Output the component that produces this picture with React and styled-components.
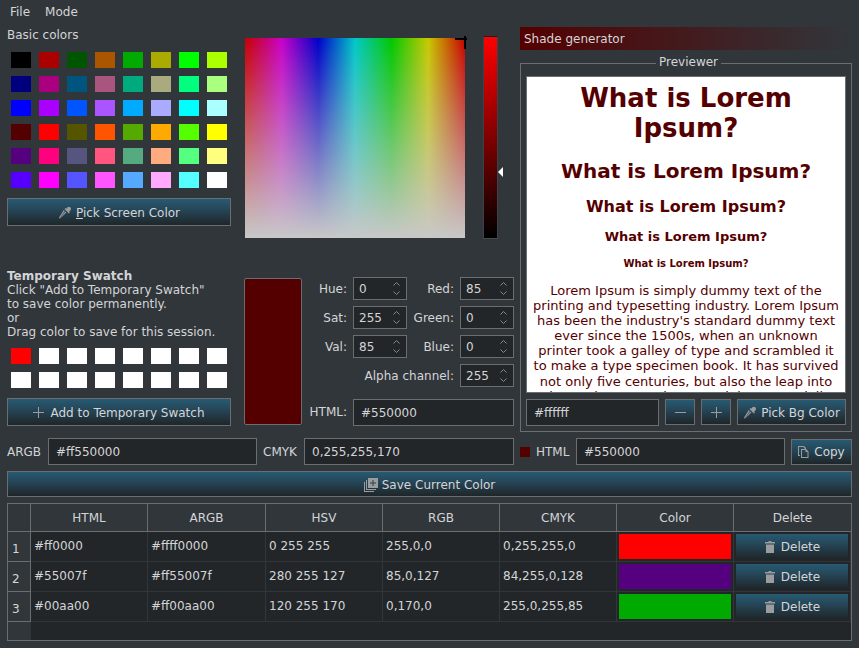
import React from "react";
import styled, { createGlobalStyle } from "styled-components";

const GlobalStyle = createGlobalStyle`
  html, body {
    margin: 0;
    padding: 0;
    background: #31363b;
  }
  * {
    box-sizing: border-box;
  }
`;

const basicColors = [
  "#000000", "#aa0000", "#005500", "#aa5500", "#00aa00", "#aaaa00", "#00ff00", "#aaff00",
  "#00007f", "#aa007f", "#00557f", "#aa557f", "#00aa7f", "#aaaa7f", "#00ff7f", "#aaff7f",
  "#0000ff", "#aa00ff", "#0055ff", "#aa55ff", "#00aaff", "#aaaaff", "#00ffff", "#aaffff",
  "#550000", "#ff0000", "#555500", "#ff5500", "#55aa00", "#ffaa00", "#55ff00", "#ffff00",
  "#55007f", "#ff007f", "#55557f", "#ff557f", "#55aa7f", "#ffaa7f", "#55ff7f", "#ffff7f",
  "#5500ff", "#ff00ff", "#5555ff", "#ff55ff", "#55aaff", "#ffaaff", "#55ffff", "#ffffff",
];

const tempColors = ["#ff0000", ...Array(15).fill("#ffffff")];

const savedColors = [
  { html: "#ff0000", argb: "#ffff0000", hsv: "0 255 255", rgb: "255,0,0", cmyk: "0,255,255,0", color: "#ff0000" },
  { html: "#55007f", argb: "#ff55007f", hsv: "280 255 127", rgb: "85,0,127", cmyk: "84,255,0,128", color: "#55007f" },
  { html: "#00aa00", argb: "#ff00aa00", hsv: "120 255 170", rgb: "0,170,0", cmyk: "255,0,255,85", color: "#00aa00" },
];

const Window = styled.div`
  width: 859px;
  height: 648px;
  overflow: hidden;
  background: #31363b;
  color: #d3d5d7;
  font-family: "DejaVu Sans", sans-serif;
  font-size: 12px;
  line-height: 14px;
`;

const MenuBar = styled.div`
  display: flex;
  gap: 15px;
  height: 22px;
  padding: 5px 10px 0;
`;

const MenuItem = styled.span``;

const TopArea = styled.div`
  display: flex;
  height: 405px;
  margin-top: 5px;
  padding-left: 7px;
`;

const LeftColumn = styled.div`
  width: 224px;
  margin-right: 13px;
`;

const BasicLabel = styled.div`
  padding-top: 1px;
`;

const SwatchGrid = styled.div`
  display: grid;
  grid-template-columns: repeat(8, 20px);
  grid-auto-rows: 16px;
  column-gap: 8px;
  row-gap: 8px;
  margin-top: ${(p) => p.$top}px;
  padding-left: 4px;
`;

const Swatch = styled.div`
  background: ${(p) => p.$color};
`;

const Button = styled.button`
  display: flex;
  align-items: center;
  justify-content: center;
  gap: ${(p) => p.$gap || 4}px;
  width: ${(p) => (p.$width ? `${p.$width}px` : "100%")};
  height: ${(p) => p.$height || 28}px;
  margin-top: ${(p) => p.$top || 0}px;
  padding: 1px 0 0;
  border: ${(p) => (p.$flat ? "0" : "1px solid #6a6e71")};
  border-radius: 0;
  background: linear-gradient(#275a72, #26495c 35%, #1f2629);
  color: #d3d5d7;
  font: inherit;
`;

const Underlined = styled.span`
  text-decoration: underline;
`;

const SwatchHelp = styled.div`
  margin-top: 43px;
`;

const Strong = styled.div`
  font-weight: bold;
`;

const MiddleColumn = styled.div`
  width: 270px;
  margin-right: 6px;
`;

const PickerRow = styled.div`
  display: flex;
  align-items: flex-start;
  height: 212px;
  padding: 9px 0 0 1px;
`;

const Spectrum = styled.div`
  position: relative;
  width: 220px;
  height: 200px;
  margin-top: 2px;
  background:
    linear-gradient(rgba(200, 200, 200, 0), #c8c8c8),
    linear-gradient(
      to right,
      #c80000,
      #c800c8 16.67%,
      #0000c8 33.33%,
      #00c8c8 50%,
      #00c800 66.67%,
      #c8c800 83.33%,
      #c80000
    );
`;

const CrossH = styled.div`
  position: absolute;
  top: 0;
  right: -2px;
  width: 12px;
  height: 2px;
  background: #000;
`;

const CrossV = styled.div`
  position: absolute;
  top: -2px;
  right: -1px;
  width: 2px;
  height: 13px;
  background: #000;
`;

const ValueBar = styled.div`
  position: relative;
  width: 15px;
  height: 203px;
  margin-left: 18px;
  border: 1px solid #1d2023;
  border-left-color: #3c4247;
  border-right-color: #3c4247;
  border-bottom-color: #444a50;
  background: linear-gradient(#ff0000, #000000);
`;

const ValueArrow = styled.div`
  position: absolute;
  top: 130px;
  left: 14px;
  width: 0;
  height: 0;
  border-style: solid;
  border-width: 5px 5px 5px 0;
  border-color: transparent #ffffff transparent transparent;
`;

const FormRow = styled.div`
  display: flex;
  align-items: flex-start;
  margin-top: 38px;
`;

const CurrentColor = styled.div`
  width: 58px;
  height: 147px;
  margin-top: 1px;
  border: 1px solid #6a6e71;
  border-radius: 2px;
  background: #550000;
`;

const FieldGrid = styled.div`
  display: grid;
  grid-template-columns: 45px 54px 41px 54px;
  grid-template-rows: repeat(4, 23px) 33px;
  column-gap: 6px;
  row-gap: 6px;
`;

const FieldLabel = styled.label`
  grid-column: ${(p) => p.$span || "auto"};
  align-self: center;
  text-align: right;
  white-space: nowrap;
`;

const Spin = styled.div`
  display: flex;
  align-items: center;
  justify-content: space-between;
  padding: 0 6px 0 5px;
  border: 1px solid #6a6e71;
  background: #232629;
`;

const SpinArrows = styled.svg`
  display: block;
  width: 7px;
  height: 17px;
`;

const TextField = styled.div`
  display: flex;
  align-items: center;
  width: ${(p) => (p.$width ? `${p.$width}px` : "auto")};
  height: 27px;
  padding: 0 7px;
  border: 1px solid #6a6e71;
  background: #232629;
  grid-column: ${(p) => p.$span || "auto"};
`;

const HtmlLabel = styled(FieldLabel)`
  align-self: end;
  margin-bottom: 7px;
`;

const HtmlField = styled(TextField)`
  align-self: end;
`;

const RightColumn = styled.div`
  width: 332px;
`;

const ShadeBar = styled.div`
  height: 23px;
  padding: 5px 4px 0;
  background: linear-gradient(to right, #550000, #31363b);
`;

const Group = styled.fieldset`
  height: 377px;
  margin: 5px 0 0;
  padding: 0 5px;
  border: 1px solid #6a6e71;
`;

const Legend = styled.legend`
  margin-left: 130px;
  padding: 0 3px 2px;
`;

const Preview = styled.div`
  height: 317px;
  margin-top: 5px;
  padding: 6px 5px 0;
  overflow: hidden;
  border: 1px solid #6a6e71;
  background: #ffffff;
  color: #550000;
  text-align: center;
  font-size: 13px;
`;

const H1 = styled.div`
  font-size: 26px;
  line-height: 30px;
  font-weight: bold;
`;

const H2 = styled.div`
  margin-top: ${(p) => p.$top}px;
  font-size: ${(p) => p.$size}px;
  line-height: ${(p) => p.$line}px;
  font-weight: bold;
`;

const Lorem = styled.p`
  margin: 13px 0 0;
  font-size: 13px;
  line-height: 15.1px;
`;

const PreviewTools = styled.div`
  display: flex;
  align-items: flex-start;
  gap: 6px;
  margin-top: 6px;
`;

const ValueRow = styled.div`
  display: grid;
  grid-template-columns: 35px 209px 35px 210px 10px 34px 209px 61px;
  column-gap: 6px;
  align-items: center;
  margin-top: 6px;
  padding-left: 7px;
`;

const ColorDot = styled.div`
  width: 10px;
  height: 10px;
  background: #550000;
`;

const SaveWrap = styled.div`
  margin: 6px 7px 0;
`;

const Table = styled.div`
  display: grid;
  grid-template-columns: 23px 117px 118px repeat(4, 117px) 1fr;
  grid-template-rows: 28px 30px 30px 30px 1fr;
  height: 138px;
  margin: 6px 7px 0;
  border: 1px solid #6a6e71;
  background: #232629;
`;

const HeaderCell = styled.div`
  display: flex;
  align-items: center;
  justify-content: center;
  border-right: 1px solid #6a6e71;
  border-bottom: 1px solid #6a6e71;
  background: #31363b;

  &:nth-child(8) {
    border-right: 0;
  }
`;

const RowNumber = styled.div`
  display: flex;
  align-items: center;
  padding: 4px 0 0 4px;
  border-right: 1px solid #6a6e71;
  border-bottom: 1px solid #6a6e71;
  background: #31363b;
`;

const Cell = styled.div`
  display: flex;
  align-items: center;
  padding: 0 4px 2px 3px;
  border-right: 1px solid #31363b;
  border-bottom: 1px solid #31363b;
`;

const ToolCell = styled.div`
  display: flex;
  padding: 2px;
  border-right: 1px solid #31363b;
  border-bottom: 1px solid #31363b;
`;

const ColorFill = styled.div`
  flex: 1;
  height: 25px;
  background: ${(p) => p.$color};
`;

const CornerFill = styled.div`
  background: #31363b;
`;

const EmptyFill = styled.div`
  grid-column: 2 / -1;
`;

const IconWrap = styled.svg`
  display: block;
  flex: none;
  width: ${(p) => p.$size || 14}px;
  height: ${(p) => p.$size || 14}px;
  fill: #9a9c9e;
`;

const SpinIcon = () => (
  <SpinArrows viewBox="0 0 7 17" fill="none" stroke="#84888b" strokeWidth="1">
    <path d="M0.5 5.5 L3.5 2.5 L6.5 5.5" />
    <path d="M0.5 11.5 L3.5 14.5 L6.5 11.5" />
  </SpinArrows>
);

const PipetteIcon = () => (
  <IconWrap viewBox="0 0 14 14" $size={14}>
    <path d="M9.2 1.6 C10 0.6 11.3 0.4 12.3 1.3 C13.3 2.2 13.2 3.6 12.3 4.5 L11.2 5.6 L11.9 6.4 L10.9 7.4 L6.5 3 L7.5 2 L8.2 2.7 Z" />
    <path d="M5.8 4 L6.8 5 L2.9 10.8 L1.6 12.6 L0.8 12 L1.9 10.2 Z M7.3 5.5 L8.3 6.5 L3.2 11.6 L1.8 12.8 Z" />
  </IconWrap>
);

const PlusIcon = () => (
  <IconWrap viewBox="0 0 11 11" $size={11}>
    <path d="M5 0 H6 V5 H11 V6 H6 V11 H5 V6 H0 V5 H5 Z" />
  </IconWrap>
);

const MinusIcon = () => (
  <IconWrap viewBox="0 0 11 11" $size={11}>
    <path d="M0 5 H11 V6 H0 Z" />
  </IconWrap>
);

const CopyIcon = () => (
  <IconWrap viewBox="0 0 12 12" $size={12}>
    <path d="M0 0 H6 L8 2 V3 H7 L5.5 1 H1 V9 H2 V10 H0 Z" />
    <path d="M3 3 H8 L10.5 5.5 V12 H3 Z M4 4 V11 H9.5 V6 H7.5 V4 Z" />
  </IconWrap>
);

const SaveIcon = () => (
  <IconWrap viewBox="0 0 14 14" $size={14}>
    <path d="M4 0 H14 V10 H4 Z M8.5 2 V4.5 H6 V5.5 H8.5 V8 H9.5 V5.5 H12 V4.5 H9.5 V2 Z" fillRule="evenodd" />
    <path d="M2 2 H3 V11 H12 V12 H2 Z" />
    <path d="M0 4 H1 V13 H10 V14 H0 Z" />
  </IconWrap>
);

const TrashIcon = () => (
  <IconWrap viewBox="0 0 10 12" $size={12}>
    <path d="M3.5 0 H6.5 V1 H10 V2.5 H0 V1 H3.5 Z" />
    <path d="M1 3.5 H9 V12 H1 Z" />
  </IconWrap>
);

const fields = [
  ["Hue:", "0", "Red:", "85"],
  ["Sat:", "255", "Green:", "0"],
  ["Val:", "85", "Blue:", "0"],
];

const headers = ["HTML", "ARGB", "HSV", "RGB", "CMYK", "Color", "Delete"];

export default function App() {
  return (
    <Window>
      <GlobalStyle />
      <MenuBar>
        <MenuItem>File</MenuItem>
        <MenuItem>Mode</MenuItem>
      </MenuBar>

      <TopArea>
        <LeftColumn>
          <BasicLabel>Basic colors</BasicLabel>
          <SwatchGrid $top={10}>
            {basicColors.map((c, i) => (
              <Swatch key={i} $color={c} />
            ))}
          </SwatchGrid>
          <Button $top={10}>
            <PipetteIcon />
            <span>
              <Underlined>P</Underlined>ick Screen Color
            </span>
          </Button>
          <SwatchHelp>
            <Strong>Temporary Swatch</Strong>
            <div>Click "Add to Temporary Swatch"</div>
            <div>to save color permanently.</div>
            <div>or</div>
            <div>Drag color to save for this session.</div>
          </SwatchHelp>
          <SwatchGrid $top={9}>
            {tempColors.map((c, i) => (
              <Swatch key={i} $color={c} />
            ))}
          </SwatchGrid>
          <Button $top={10} $gap={6}>
            <PlusIcon />
            <span>Add to Temporary Swatch</span>
          </Button>
        </LeftColumn>

        <MiddleColumn>
          <PickerRow>
            <Spectrum>
              <CrossH />
              <CrossV />
            </Spectrum>
            <ValueBar>
              <ValueArrow />
            </ValueBar>
          </PickerRow>
          <FormRow>
            <CurrentColor />
            <FieldGrid>
              {fields.map((f) => (
                <React.Fragment key={f[0]}>
                  <FieldLabel>{f[0]}</FieldLabel>
                  <Spin>
                    {f[1]}
                    <SpinIcon />
                  </Spin>
                  <FieldLabel>{f[2]}</FieldLabel>
                  <Spin>
                    {f[3]}
                    <SpinIcon />
                  </Spin>
                </React.Fragment>
              ))}
              <FieldLabel $span="1 / span 3">Alpha channel:</FieldLabel>
              <Spin>
                255
                <SpinIcon />
              </Spin>
              <HtmlLabel>HTML:</HtmlLabel>
              <HtmlField $span="2 / span 3">#550000</HtmlField>
            </FieldGrid>
          </FormRow>
        </MiddleColumn>

        <RightColumn>
          <ShadeBar>Shade generator</ShadeBar>
          <Group>
            <Legend>Previewer</Legend>
            <Preview>
              <H1>What is Lorem Ipsum?</H1>
              <H2 $top={16} $size={20} $line={24}>What is Lorem Ipsum?</H2>
              <H2 $top={14} $size={16} $line={19}>What is Lorem Ipsum?</H2>
              <H2 $top={13} $size={13} $line={15}>What is Lorem Ipsum?</H2>
              <H2 $top={14} $size={10} $line={12}>What is Lorem Ipsum?</H2>
              <Lorem>
                Lorem Ipsum is simply dummy text of the printing and typesetting industry. Lorem
                Ipsum has been the industry's standard dummy text ever since the 1500s, when an
                unknown printer took a galley of type and scrambled it to make a type specimen
                book. It has survived not only five centuries, but also the leap into electronic
                typesetting, remaining essentially unchanged.
              </Lorem>
            </Preview>
            <PreviewTools>
              <TextField $width={133}>#ffffff</TextField>
              <Button $width={30} $height={26}>
                <MinusIcon />
              </Button>
              <Button $width={30} $height={26}>
                <PlusIcon />
              </Button>
              <Button $width={109} $height={26}>
                <PipetteIcon />
                <span>Pick Bg Color</span>
              </Button>
            </PreviewTools>
          </Group>
        </RightColumn>
      </TopArea>

      <ValueRow>
        <span>ARGB</span>
        <TextField>#ff550000</TextField>
        <span>CMYK</span>
        <TextField>0,255,255,170</TextField>
        <ColorDot />
        <span>HTML</span>
        <TextField>#550000</TextField>
        <Button $height={26}>
          <CopyIcon />
          <span>Copy</span>
        </Button>
      </ValueRow>

      <SaveWrap>
        <Button $height={26}>
          <SaveIcon />
          <span>Save Current Color</span>
        </Button>
      </SaveWrap>

      <Table>
        <HeaderCell />
        {headers.map((h) => (
          <HeaderCell key={h}>{h}</HeaderCell>
        ))}
        {savedColors.map((row, i) => (
          <React.Fragment key={row.html}>
            <RowNumber>{i + 1}</RowNumber>
            <Cell>{row.html}</Cell>
            <Cell>{row.argb}</Cell>
            <Cell>{row.hsv}</Cell>
            <Cell>{row.rgb}</Cell>
            <Cell>{row.cmyk}</Cell>
            <ToolCell>
              <ColorFill $color={row.color} />
            </ToolCell>
            <ToolCell>
              <Button $height={25} $gap={5} $flat>
                <TrashIcon />
                <span>Delete</span>
              </Button>
            </ToolCell>
          </React.Fragment>
        ))}
        <CornerFill />
        <EmptyFill />
      </Table>
    </Window>
  );
}
